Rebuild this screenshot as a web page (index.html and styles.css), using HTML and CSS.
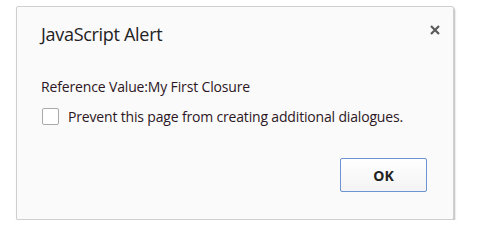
FILE: index.html
```html
<!DOCTYPE html>
<html>
<head>
<meta charset="utf-8">
<link rel="stylesheet" href="styles.css">
</head>
<body>
<div class="dialog">
  <div class="header">
    <div class="title">JavaScript Alert</div>
    <div class="close" aria-label="Close">
      <svg width="10" height="10" viewBox="0 0 10 10"><path d="M1 1L9 9M9 1L1 9" stroke="#5a5a5a" stroke-width="2.2" stroke-linecap="butt"/></svg>
    </div>
  </div>
  <div class="message">Reference Value:My First Closure</div>
  <label class="check"><span class="box"></span><span class="check-text">Prevent this page from creating additional dialogues.</span></label>
  <div class="buttons"><button class="ok">OK</button></div>
</div>
</body>
</html>
```
FILE: styles.css
```css
html, body { margin: 0; padding: 0; background: #ffffff; }
body {
  padding: 6px 0 0 16px;
  font-family: "Open Sans", "Noto Sans", sans-serif;
  color: #2b1a22;
}
.dialog {
  width: 438px;
  height: 214px;
  box-sizing: border-box;
  background: #fafafa;
  border: 1px solid #cfcfcf;
  border-radius: 2px;
  box-shadow: 1px 2px 2px rgba(0,0,0,0.28);
  padding: 0 0 0 24px;
  display: flex;
  flex-direction: column;
}
.header {
  display: flex;
  justify-content: space-between;
  align-items: flex-start;
  padding-top: 15px;
  padding-right: 13px;
}
.title {
  font-size: 18px;
  color: #222;
  letter-spacing: -0.3px;
}
.close { padding-top: 3px; display: flex; }
.message {
  margin-top: 31px;
  font-size: 14px;
  letter-spacing: -0.15px;
  color: #2d1724;
}
.check {
  display: flex;
  align-items: center;
  margin-top: 11px;
  margin-left: 1px;
}
.box {
  width: 15px;
  height: 15px;
  border: 1px solid #a9a9a9;
  border-radius: 2px;
  background: #fff;
  margin-right: 9px;
}
.check-text {
  font-size: 14px;
  letter-spacing: -0.17px;
  color: #2d1724;
}
.buttons {
  display: flex;
  justify-content: flex-end;
  padding-right: 26px;
  margin-top: 32px;
}
.ok {
  width: 87px;
  height: 34px;
  border: 1px solid #6b93d6;
  border-radius: 2px;
  background: linear-gradient(#ffffff, #f3f3f3);
  font-family: "Open Sans", sans-serif;
  font-weight: bold;
  font-size: 14px;
  color: #222;
}
```
